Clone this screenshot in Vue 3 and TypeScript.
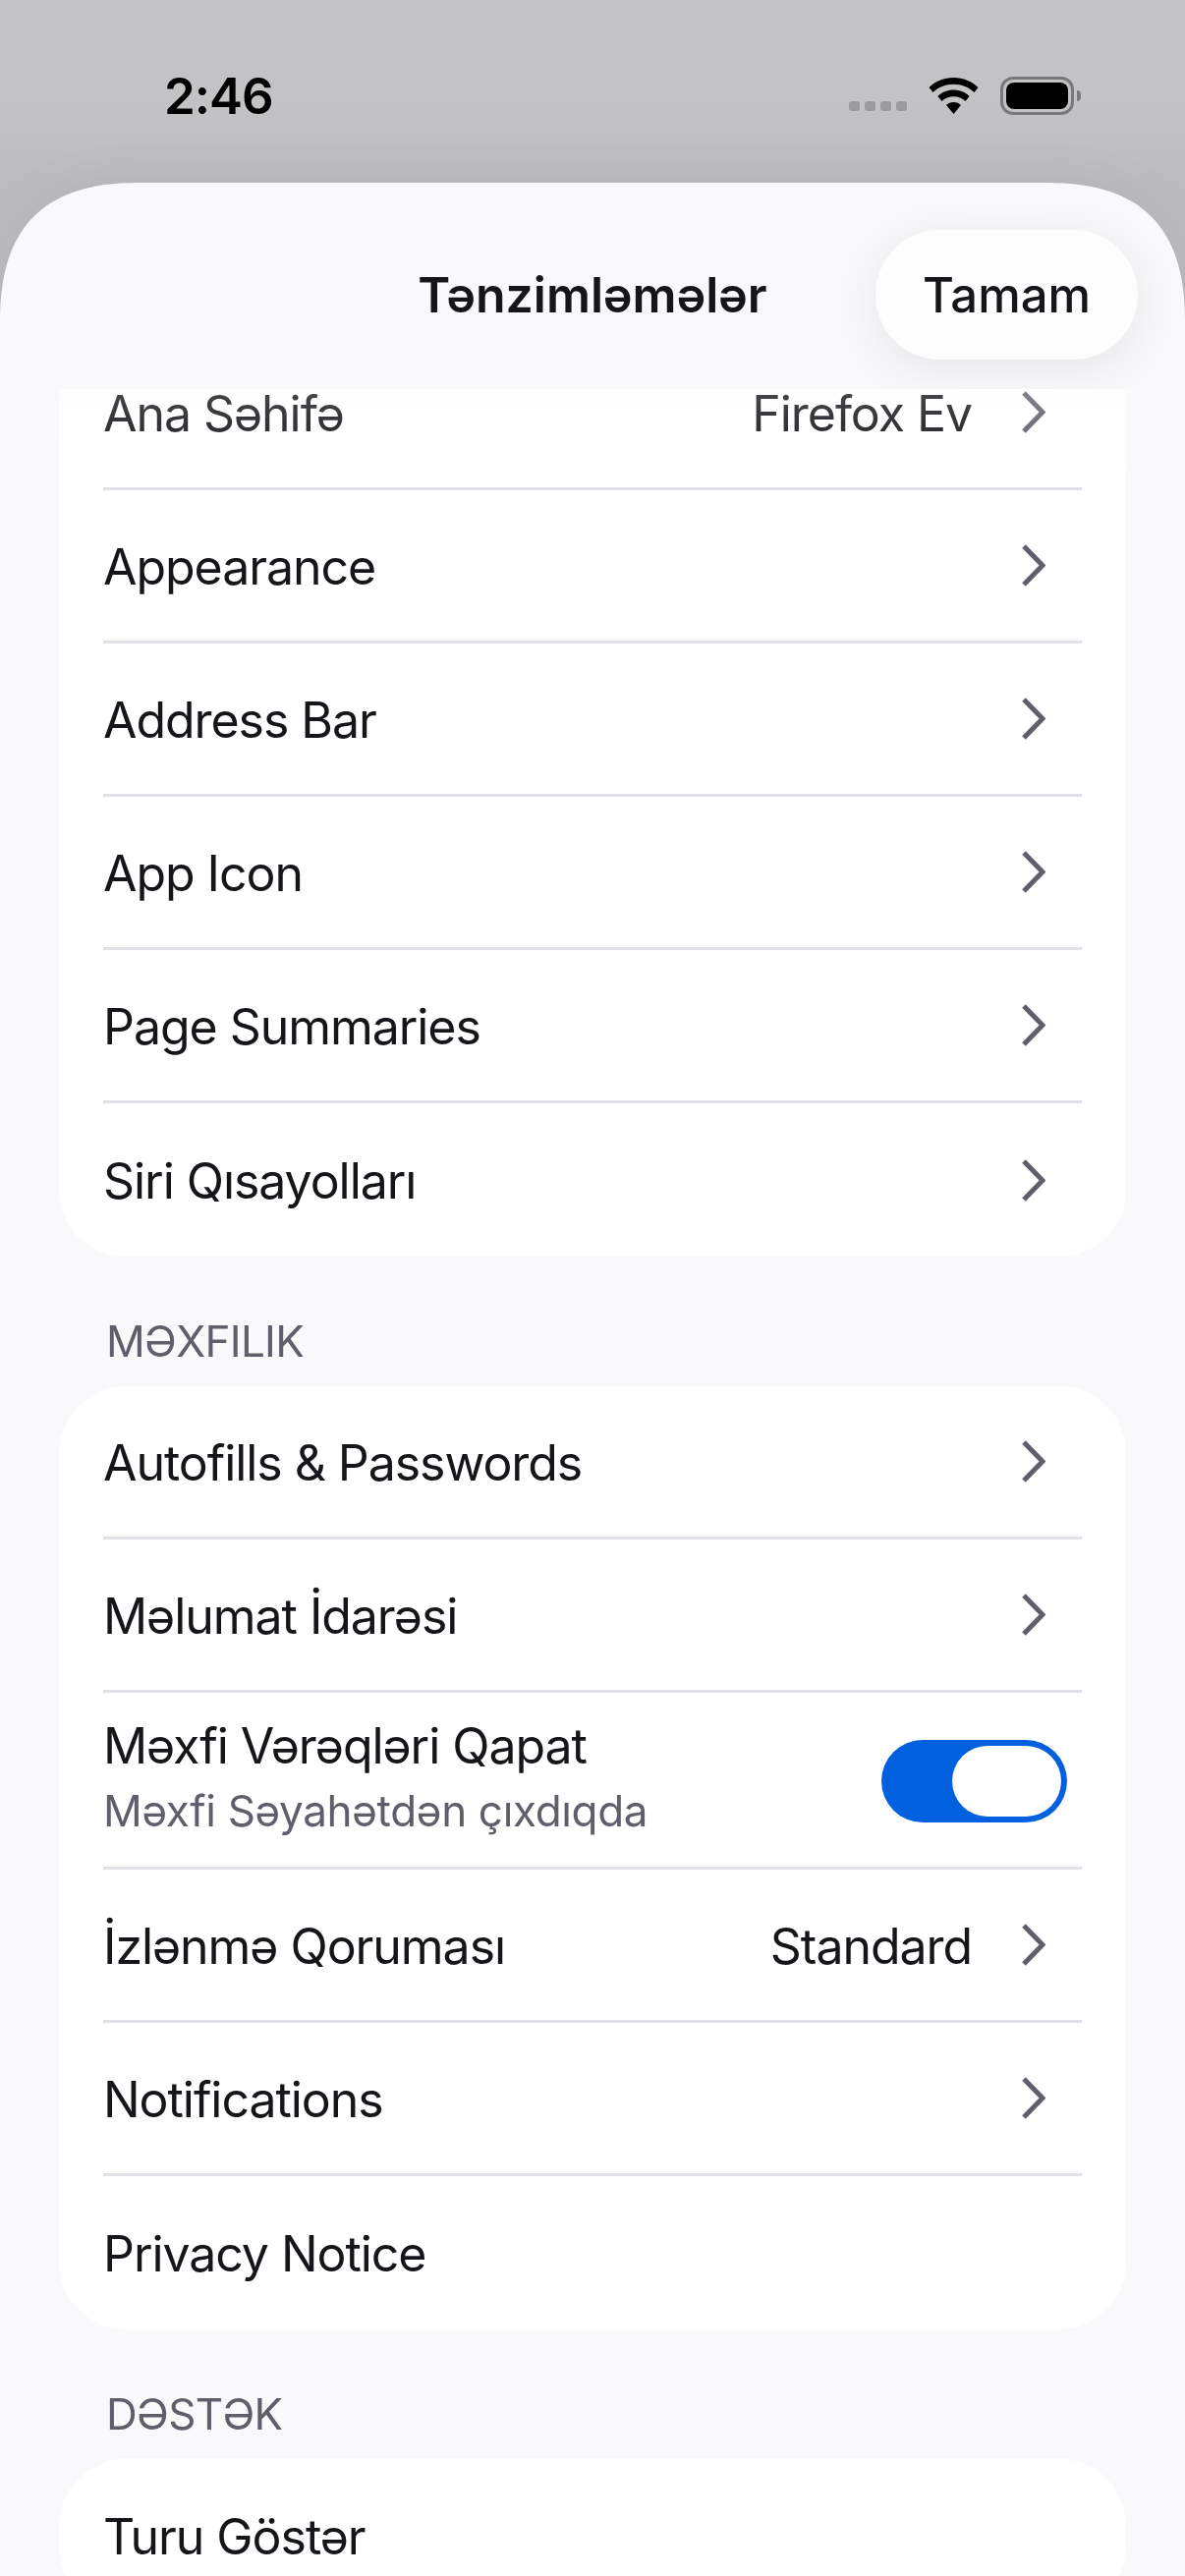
<template>
  <div class="screen">
    <div class="status-bar">
      <span class="time">2:46</span>
      <div class="status-icons">
        <div class="signal">
          <i v-for="n in 4" :key="n"></i>
        </div>
        <svg class="wifi" width="51" height="37" viewBox="0 0 51 37">
          <path d="M25.5 0C15.7 0 7 3.8 0.5 10L4.5 15C9.9 9.9 17.3 6.8 25.5 6.8S41.1 9.9 46.5 15L50.5 10C44 3.8 35.3 0 25.5 0Z" />
          <path d="M25.5 12.5C19.2 12.5 13.6 14.9 9.4 18.9L13.5 24C16.6 21 20.8 19.2 25.5 19.2S34.4 21 37.5 24L41.6 18.9C37.4 14.9 31.8 12.5 25.5 12.5Z" />
          <path d="M25.5 25C22.6 25 20 26.1 18 27.9L25.5 37L33 27.9C31 26.1 28.4 25 25.5 25Z" />
        </svg>
        <div class="battery">
          <div class="battery-fill"></div>
        </div>
      </div>
    </div>

    <div class="sheet-shadow">
      <main class="sheet">
        <header class="sheet-header">
          <h1 class="sheet-title">Tənzimləmələr</h1>
          <button class="done-btn">Tamam</button>
        </header>

        <div class="list-wrap">
          <div class="list">
            <template v-for="section in sections" :key="section.id">
              <h2 v-if="section.title" class="section-title">{{ section.title }}</h2>
              <section class="card">
                <div v-for="row in section.rows" :key="row.label" class="row" :class="{ 'row-tall': row.toggle }">
                  <div class="row-text">
                    <span class="row-label">{{ row.label }}</span>
                    <span v-if="row.sub" class="row-sub">{{ row.sub }}</span>
                  </div>
                  <span v-if="row.value" class="row-value">{{ row.value }}</span>
                  <svg v-if="row.chevron" class="chevron" width="25" height="45" viewBox="0 0 25 45">
                    <path d="M3 3L22 22.5L3 42" />
                  </svg>
                  <div v-if="row.toggle" class="toggle">
                    <div class="knob"></div>
                  </div>
                </div>
              </section>
            </template>
          </div>
          <div class="list-fade"></div>
        </div>
      </main>
    </div>
  </div>
</template>

<script setup lang="ts">
interface Row {
  label: string
  sub?: string
  value?: string
  chevron?: boolean
  toggle?: boolean
}

interface Section {
  id: string
  title?: string
  rows: Row[]
}

const sections: Section[] = [
  {
    id: 'general',
    rows: [
      { label: 'Ana Səhifə', value: 'Firefox Ev', chevron: true },
      { label: 'Appearance', chevron: true },
      { label: 'Address Bar', chevron: true },
      { label: 'App Icon', chevron: true },
      { label: 'Page Summaries', chevron: true },
      { label: 'Siri Qısayolları', chevron: true }
    ]
  },
  {
    id: 'privacy',
    title: 'MƏXFILIK',
    rows: [
      { label: 'Autofills & Passwords', chevron: true },
      { label: 'Məlumat İdarəsi', chevron: true },
      { label: 'Məxfi Vərəqləri Qapat', sub: 'Məxfi Səyahətdən çıxdıqda', toggle: true },
      { label: 'İzlənmə Qoruması', value: 'Standard', chevron: true },
      { label: 'Notifications', chevron: true },
      { label: 'Privacy Notice' }
    ]
  },
  {
    id: 'support',
    title: 'DƏSTƏK',
    rows: [{ label: 'Turu Göstər' }]
  }
]
</script>

<style>
html,
body {
  margin: 0;
  overflow: hidden;
}
</style>

<style scoped>
.screen {
  width: 1206px;
  height: 2622px;
  overflow: hidden;
  background: linear-gradient(#c3c3c5 100px, #bcbcbe 186px);
  font-family: Inter, "Noto Sans", sans-serif;
  color: #15151a;
}

.status-bar {
  height: 177px;
  padding: 9px 113px 0 167px;
  display: flex;
  align-items: center;
  justify-content: space-between;
}

.time {
  font-size: 51px;
  font-weight: 600;
  letter-spacing: -1px;
  color: #000;
}

.status-icons {
  display: flex;
  align-items: center;
}

.signal {
  display: flex;
  gap: 5px;
  margin: 21px 22px 0 0;
}

.signal i {
  width: 11px;
  height: 10px;
  border-radius: 3px;
  background: #9b9b9d;
}

.wifi {
  fill: #000;
  margin-right: 22px;
}

.battery {
  position: relative;
  width: 75px;
  height: 39px;
  box-sizing: border-box;
  border: 3px solid #79797b;
  border-radius: 13px;
  padding: 3px;
}

.battery::after {
  content: "";
  position: absolute;
  right: -10px;
  top: 11px;
  width: 4px;
  height: 11px;
  border-radius: 0 4px 4px 0;
  background: #79797b;
}

.battery-fill {
  height: 100%;
  border-radius: 8px;
  background: #000;
}

.sheet-shadow {
  filter: drop-shadow(0 0 24px rgba(0, 0, 0, 0.05));
}

.sheet {
  height: 2436px;
  background: #f9f9fb;
  clip-path: path('M0 140C0 45 45 0 140 0H1066C1161 0 1206 45 1206 140V2436H0Z');
}

.sheet-header {
  position: relative;
  height: 210px;
  box-sizing: border-box;
  padding: 48px 48px 30px;
  display: flex;
  align-items: center;
  justify-content: flex-end;
  overflow: hidden;
}

.sheet-title {
  position: absolute;
  left: 0;
  right: 0;
  top: 86px;
  margin: 0;
  text-align: center;
  font-size: 50px;
  line-height: 56px;
  font-weight: 600;
}

.done-btn {
  width: 267px;
  height: 132px;
  border: 0;
  border-radius: 66px;
  background: #fdfdfe;
  box-shadow: 0 10px 50px rgba(0, 0, 0, 0.08);
  font: 500 49px Inter, sans-serif;
  color: #15151a;
}

.list-wrap {
  position: relative;
  overflow: hidden;
  height: 2226px;
}

.list {
  margin-top: -53px;
  padding: 0 60px;
}

.list-fade {
  position: absolute;
  left: 0;
  right: 0;
  top: 0;
  height: 90px;
  background: linear-gradient(rgba(249, 249, 251, 0.22), rgba(249, 249, 251, 0));
}

.section-title {
  margin: 0;
  height: 132px;
  box-sizing: border-box;
  padding: 59px 0 0 48px;
  font-size: 44px;
  line-height: 54px;
  font-weight: 400;
  letter-spacing: -0.7px;
  color: #5f5f6b;
}

.card {
  background: #fff;
  border-radius: 68px;
  overflow: hidden;
}

.row {
  height: 156px;
  box-sizing: border-box;
  margin: 0 45px;
  padding-right: 37px;
  border-bottom: 3px solid #e1e1e7;
  display: flex;
  align-items: center;
  font-size: 50px;
  letter-spacing: -1.05px;
}

.row:last-child {
  border-bottom: 0;
}

.row-label {
  line-height: 62px;
  padding-top: 2px;
}

.row-value {
  margin-right: 50px;
  padding-top: 2px;
}

.row-tall {
  height: 180px;
  padding-right: 15px;
  padding-bottom: 4px;
}

.row-tall .row-label {
  padding-top: 0;
}

.row-text {
  flex: 1;
  display: flex;
  flex-direction: column;
  gap: 5px;
}

.row-sub {
  font-size: 44px;
  line-height: 60px;
  letter-spacing: -0.33px;
  color: #5f5f6b;
}

.chevron {
  fill: none;
  stroke: #5f5f6b;
  stroke-width: 5;
}

.toggle {
  width: 189px;
  height: 84px;
  box-sizing: border-box;
  margin-top: 7px;
  padding: 6px;
  border-radius: 42px;
  background: #0060df;
  display: flex;
  justify-content: flex-end;
}

.knob {
  width: 111px;
  height: 72px;
  border-radius: 36px;
  background: #fff;
}
</style>
